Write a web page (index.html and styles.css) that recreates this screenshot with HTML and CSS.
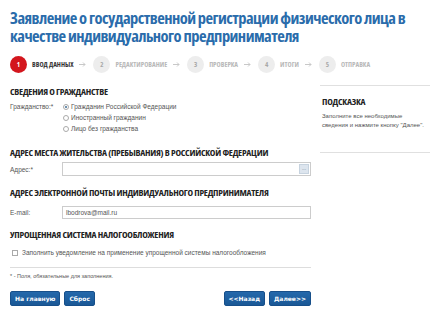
FILE: index.html
```html
<!DOCTYPE html>
<html lang="ru">
<head>
<meta charset="utf-8">
<link rel="stylesheet" href="styles.css">
</head>
<body>
<h1 class="title">Заявление о государственной регистрации физического лица в качестве индивидуального предпринимателя</h1>
<ol class="steps">
  <li class="step active"><span class="num">1</span><span class="lbl">Ввод данных</span></li>
  <li class="arrow"><svg width="7" height="5" viewBox="0 0 7 5"><path d="M0 2.5H6M4 0.5L6 2.5L4 4.5" fill="none" stroke="#c8c8c8" stroke-width="1"/></svg></li>
  <li class="step"><span class="num">2</span><span class="lbl">Редактирование</span></li>
  <li class="arrow"><svg width="7" height="5" viewBox="0 0 7 5"><path d="M0 2.5H6M4 0.5L6 2.5L4 4.5" fill="none" stroke="#c8c8c8" stroke-width="1"/></svg></li>
  <li class="step"><span class="num">3</span><span class="lbl">Проверка</span></li>
  <li class="arrow"><svg width="7" height="5" viewBox="0 0 7 5"><path d="M0 2.5H6M4 0.5L6 2.5L4 4.5" fill="none" stroke="#c8c8c8" stroke-width="1"/></svg></li>
  <li class="step"><span class="num">4</span><span class="lbl">Итоги</span></li>
  <li class="arrow"><svg width="7" height="5" viewBox="0 0 7 5"><path d="M0 2.5H6M4 0.5L6 2.5L4 4.5" fill="none" stroke="#c8c8c8" stroke-width="1"/></svg></li>
  <li class="step"><span class="num">5</span><span class="lbl">Отправка</span></li>
</ol>
<div class="layout">
  <div class="form">
    <h2 class="sec first">Сведения о гражданстве</h2>
    <div class="row radios-row">
      <span class="label">Гражданство:*</span>
      <div class="radios">
        <label class="opt"><span class="radio checked"></span>Гражданин Российской Федерации</label>
        <label class="opt"><span class="radio"></span>Иностранный гражданин</label>
        <label class="opt"><span class="radio"></span>Лицо без гражданства</label>
      </div>
    </div>
    <h2 class="sec s2">Адрес места жительства (пребывания) в Российской Федерации</h2>
    <div class="row input-row">
      <span class="label">Адрес:*</span>
      <div class="input"><span class="val"></span><span class="dots">...</span></div>
    </div>
    <h2 class="sec s3">Адрес электронной почты индивидуального предпринимателя</h2>
    <div class="row input-row email">
      <span class="label">E-mail:</span>
      <div class="input"><span class="val">lbodrova@mail.ru</span></div>
    </div>
    <h2 class="sec s4">Упрощенная система налогообложения</h2>
    <label class="check-row"><span class="box"></span>Заполнить уведомление на применение упрощенной системы налогообложения</label>
    <div class="note">* - Поля, обязательные для заполнения.</div>
    <div class="actions">
      <div class="group">
        <button class="btn">На главную</button>
        <button class="btn">Сброс</button>
      </div>
      <div class="group">
        <button class="btn">&lt;&lt;Назад</button>
        <button class="btn">Далее&gt;&gt;</button>
      </div>
    </div>
  </div>
  <aside class="hint">
    <h2 class="sec">Подсказка</h2>
    <p>Заполните все необходимые<br>сведения и нажмите кнопку "Далее".</p>
  </aside>
</div>
</body>
</html>
```
FILE: styles.css
```css
* { box-sizing: border-box; }
html, body { background: #fff; }
body {
  margin: 0;
  padding: 9px 10px 0 10px;
  font-family: "Liberation Sans", Arial, sans-serif;
  color: #333;
}
.title {
  margin: 0;
  font-family: "Open Sans", sans-serif;
  font-stretch: 75%;
  font-weight: 700;
  font-size: 16.5px;
  line-height: 18px;
  letter-spacing: -0.55px;
  color: #2a6cab;
  width: 420px;
}
.steps {
  list-style: none;
  margin: 10px 0 0 0;
  padding: 0;
  display: flex;
  align-items: center;
  height: 18px;
}
.step { display: flex; align-items: center; }
.num {
  width: 17px;
  height: 17px;
  border-radius: 50%;
  background: #ededed;
  color: #a8a8a8;
  font-family: "Open Sans", sans-serif;
  font-stretch: 75%;
  font-weight: 700;
  font-size: 7px;
  display: flex;
  align-items: center;
  justify-content: center;
}
.lbl {
  margin-left: 5px;
  font-family: "Open Sans", sans-serif;
  font-stretch: 75%;
  font-weight: 700;
  font-size: 7px;
  text-transform: uppercase;
  color: #b8b8b8;
}
.step.active .num { background: #d3161d; color: #fff; }
.step.active .lbl { color: #333; }
.arrow { display: flex; align-items: center; margin: 0 7px 0 6px; }
.layout {
  margin-top: 12px;
  display: grid;
  grid-template-columns: 301px 110px;
  column-gap: 9px;
  align-items: start;
}
.sec {
  margin: 0;
  font-family: "Open Sans", sans-serif;
  font-stretch: 75%;
  font-weight: 700;
  font-size: 9.5px;
  letter-spacing: -0.25px;
  line-height: 12px;
  text-transform: uppercase;
  color: #222;
  white-space: nowrap;
}
.sec.first { margin-top: 1px; }
.sec.s2 { margin-top: 13px; }
.sec.s3 { margin-top: 11px; }
.sec.s4 { margin-top: 10px; }
.row { display: flex; font-size: 6.5px; color: #555; }
.label { width: 52px; flex: none; }
.radios-row { margin-top: 3px; }
.radios-row .label { line-height: 11px; }
.radios { display: flex; flex-direction: column; }
.opt { display: flex; align-items: center; height: 11px; color: #555; }
.radio {
  width: 6px; height: 6px;
  border-radius: 50%;
  border: 1px solid #aaa;
  background: #fff;
  margin: 0 2px 0 1px;
  position: relative;
}
.radio.checked::after {
  content: "";
  position: absolute;
  left: 1px; top: 1px;
  width: 2px; height: 2px;
  border-radius: 50%;
  background: #3d6c95;
}
.input-row { margin-top: 3px; align-items: center; }
.input {
  flex: 1;
  height: 14px;
  border: 1px solid #ccc;
  display: flex;
  align-items: center;
  justify-content: space-between;
  padding: 0 1px 0 3px;
}
.val { font-size: 6.5px; color: #555; }
.dots {
  width: 10px; height: 10px;
  background: #dde5ee;
  border: 1px solid #c7d3df;
  color: #678;
  font-size: 5px;
  line-height: 6px;
  text-align: center;
}
.email { margin-top: 7px; }
.email .input { height: 13px; }
.check-row {
  display: flex;
  align-items: center;
  margin-top: 7px;
  height: 9px;
  font-size: 6.5px;
  color: #555;
}
.box {
  width: 6px; height: 6px;
  border: 1px solid #aaa;
  margin: 0 4px 0 2px;
  background: #fff;
}
.note {
  margin-top: 10px;
  border-top: 1px solid #ddd;
  padding-top: 4px;
  font-size: 5.5px;
  color: #555;
  line-height: 8px;
}
.actions {
  margin-top: 11px;
  display: flex;
  justify-content: space-between;
}
.group { display: flex; gap: 4px; }
.btn {
  height: 15px;
  border: 1px solid #174f8a;
  border-radius: 2px;
  background: linear-gradient(#2468ab, #1a5896);
  color: #fff;
  font-family: "DejaVu Sans", sans-serif;
  font-weight: 700;
  font-size: 6px;
  padding: 0 4px;
  line-height: 13px;
}
.hint {
  border-top: 1px solid #e0e0e0;
  border-bottom: 1px solid #e0e0e0;
  padding: 10px 2px 22px 2px;
}
.hint p {
  margin: 4px 0 0 0;
  font-size: 6px;
  line-height: 9px;
  color: #555;
}
```
